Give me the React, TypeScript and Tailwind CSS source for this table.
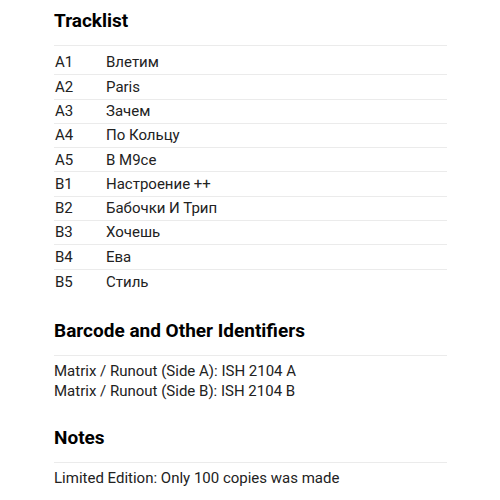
const tracks = [
  { pos: 'A1', title: 'Влетим' },
  { pos: 'A2', title: 'Paris' },
  { pos: 'A3', title: 'Зачем' },
  { pos: 'A4', title: 'По Кольцу' },
  { pos: 'A5', title: 'В М9се' },
  { pos: 'B1', title: 'Настроение ++' },
  { pos: 'B2', title: 'Бабочки И Трип' },
  { pos: 'B3', title: 'Хочешь' },
  { pos: 'B4', title: 'Ева' },
  { pos: 'B5', title: 'Стиль' },
];

const identifiers = [
  'Matrix / Runout (Side A): ISH 2104 A',
  'Matrix / Runout (Side B): ISH 2104 B',
];

function Heading({ children }: { children: string }) {
  return (
    <h2 className="text-[19px] leading-[24px] font-bold text-black border-b border-[#ebebeb] pb-[12px]">
      {children}
    </h2>
  );
}

export default function App() {
  return (
    <div className="w-[500px] h-[500px] bg-white overflow-hidden font-['Roboto',sans-serif] text-[#222]">
      <div className="pl-[54px] pr-[53px] pt-[9px]">
        {/* Tracklist */}
        <section>
          <Heading>Tracklist</Heading>
          <div className="pt-[5px]">
            {tracks.map((t, i) => (
              <div
                key={t.pos}
                className={`flex items-center h-[24.3px] text-[15px] pl-[1px] ${
                  i < tracks.length - 1 ? 'border-b border-[#ebebeb]' : ''
                }`}
              >
                <span className="w-[51px]">{t.pos}</span>
                <span>{t.title}</span>
              </div>
            ))}
          </div>
        </section>

        {/* Identifiers */}
        <section className="mt-[25px]">
          <Heading>Barcode and Other Identifiers</Heading>
          <div className="pt-[5px] text-[15px] leading-[20px]">
            {identifiers.map((line) => (
              <div key={line}>{line}</div>
            ))}
          </div>
        </section>

        {/* Notes */}
        <section className="mt-[25px]">
          <Heading>Notes</Heading>
          <div className="pt-[5px] text-[15px] leading-[20px]">
            Limited Edition: Only 100 copies was made
          </div>
        </section>
      </div>
    </div>
  );
}
